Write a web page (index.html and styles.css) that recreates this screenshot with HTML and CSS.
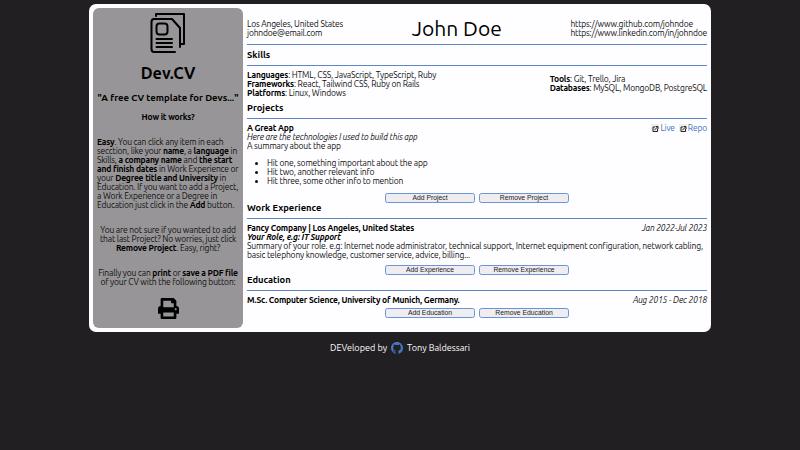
FILE: index.html
```html
<!DOCTYPE html>
<html lang="en">
<head>
<meta charset="utf-8">
<title>Dev.CV</title>
<link rel="stylesheet" href="styles.css">
</head>
<body>
<div class="card">
  <aside class="sidebar">
    <svg class="logo" viewBox="0 0 36 40" fill="none" stroke="#000" stroke-width="2" stroke-linecap="round" stroke-linejoin="round">
      <path d="M6 3V1H34V31H31"/>
      <path d="M25 39H4Q1.500 39 1.500 36V9Q1.500 6 4 6H22L30 15V34"/>
      <rect x="6.500" y="10.500" width="11" height="11" rx="3"/>
      <path d="M6.500 26H22M6.500 30H22M6.500 34H22"/>
    </svg>
    <h1>Dev.CV</h1>
    <h2><span>"A free CV template for Devs..."</span></h2>
    <h3>How it works?</h3>
    <p class="easy"><span><b>Easy</b>. You can click any item in each</span><br><span>secction, like your <b>name</b>, a <b>language</b> in</span><br><span>Skills, <b>a company name</b> and <b>the start</b></span><br><span><b>and finish dates</b> in Work Experience or</span><br><span>your <b>Degree title and University</b> in</span><br><span>Education. If you want to add a Project,</span><br><span>a Work Experience or a Degree in</span><br><span>Education just click in the <b>Add</b> button.</span></p>
    <p class="sure"><span>You are not sure if you wanted to add</span><br><span>that last Project? No worries, just click</span><br><span><b>Remove Project</b>. Easy, right?</span></p>
    <p class="final"><span>Finally you can <b>print</b> or <b>save a PDF file</b></span><br><span>of your CV with the following button:</span></p>
    <svg class="printer" viewBox="0 0 512 512"><path d="M448 192V77.250c0-8.490-3.370-16.620-9.370-22.630L393.370 9.370c-6-6-14.140-9.370-22.630-9.370H96C78.330 0 64 14.330 64 32v160c-35.350 0-64 28.650-64 64v112c0 8.840 7.160 16 16 16h48v96c0 17.670 14.330 32 32 32h320c17.670 0 32-14.330 32-32v-96h48c8.840 0 16-7.160 16-16V256c0-35.350-28.650-64-64-64zm-64 256H128v-96h256v96zm0-224H128V64h192v48c0 8.840 7.160 16 16 16h48v96zm48 72c-13.250 0-24-10.750-24-24s10.750-24 24-24 24 10.750 24 24-10.750 24-24 24z"/></svg>
  </aside>
  <main>
    <header>
      <div class="contact"><span>Los Angeles, United States</span><br><span>johndoe@email.com</span></div>
      <div class="name">John Doe</div>
      <div class="contact"><span>https://www.github.com/johndoe</span><br><span>https://www.linkedin.com/in/johndoe</span></div>
    </header>
    <h4 class="first">Skills</h4>
    <section class="skills">
      <div class="languages"><span><b>Languages</b>: HTML, CSS, JavaScript, TypeScript, Ruby</span><br><span><b>Frameworks</b>: React, Tailwind CSS, Ruby on Rails</span><br><span><b>Platforms</b>: Linux, Windows</span></div>
      <div><span><b>Tools</b>: Git, Trello, Jira</span><br><span><b>Databases</b>: MySQL, MongoDB, PostgreSQL</span></div>
    </section>
    <h4>Projects</h4>
    <section class="project">
      <div class="row"><b>A Great App</b>
        <div class="links">
          <span class="ext"><svg viewBox="0 0 8 8"><path d="M4 3H2V7.500H6.500V5M3.500 6L6.500 3M4.500 2.500H7V5"/></svg></span><span>Live</span>
          <span class="ext second"><svg viewBox="0 0 8 8"><path d="M4 3H2V7.500H6.500V5M3.500 6L6.500 3M4.500 2.500H7V5"/></svg></span><span>Repo</span>
        </div>
      </div>
      <i>Here are the technologies I used to build this app</i><br><span>A summary about the app</span>
      <ul><li>Hit one, something important about the app</li><li>Hit two, another relevant info</li><li>Hit three, some other info to mention</li></ul>
    </section>
    <div class="buttons"><button>Add Project</button><button>Remove Project</button></div>
    <h4>Work Experience</h4>
    <section class="work">
      <div class="row"><b>Fancy Company | Los Angeles, United States</b><i>Jan 2022-Jul 2023</i></div>
      <b><i>Your Role, e.g: IT Support</i></b><br><span class="summary">Summary of your role. e.g: Internet node administrator, technical support, Internet equipment configuration, network cabling,</span><br><span class="summary">basic telephony knowledge, customer service, advice, billing...</span>
    </section>
    <div class="buttons"><button>Add Experience</button><button>Remove Experience</button></div>
    <h4>Education</h4>
    <section class="edu">
      <div class="row"><b>M.Sc. Computer Science, University of Munich, Germany.</b><i>Aug 2015 - Dec 2018</i></div>
    </section>
    <div class="buttons"><button>Add Education</button><button>Remove Education</button></div>
  </main>
</div>
<footer><span>DEVeloped by</span><svg viewBox="0 0 16 16"><path d="M8 0C3.580 0 0 3.580 0 8c0 3.540 2.290 6.530 5.470 7.590.4.070.55-.17.55-.38 0-.19-.01-.82-.01-1.490-2.010.37-2.530-.49-2.690-.94-.09-.23-.48-.94-.82-1.130-.28-.15-.68-.52-.01-.53.63-.01 1.080.58 1.230.82.72 1.210 1.870.87 2.330.66.07-.52.28-.87.51-1.070-1.780-.2-3.640-.89-3.640-3.950 0-.87.31-1.590.82-2.150-.08-.2-.36-1.020.08-2.120 0 0 .67-.21 2.200.82.64-.18 1.320-.27 2-.27s1.360.09 2 .27c1.530-1.040 2.200-.82 2.200-.82.44 1.100.16 1.920.08 2.120.51.56.82 1.270.82 2.150 0 3.070-1.870 3.750-3.650 3.950.29.25.54.73.54 1.480 0 1.070-.01 1.930-.01 2.200 0 .21.15.46.55.38A8.010 8.010 0 0 0 16 8c0-4.420-3.580-8-8-8z"/></svg><span>Tony Baldessari</span></footer>
</body>
</html>
```
FILE: styles.css
```css
* { box-sizing: border-box; }
body { margin: 0; padding-top: 4px; background: #221f22; color: #111; font: 8.500px/9px Ubuntu, "Noto Sans", sans-serif; letter-spacing: -0.19px; }
h1, h2, h3, h4, p, ul { margin: 0; }
span, b, i { white-space: nowrap; }
b { color: #000; }
.card { width: 622px; height: 328px; margin: 0 auto; padding: 4px; display: flex; gap: 4px; background: #fefdff; border-radius: 7px; }
.sidebar { width: 150px; height: 320px; padding: 5px 4px 0; border-radius: 6px; background: #979597; text-align: center; }
.logo { display: block; width: 36px; height: 40px; margin: 0 auto; }
h1 { margin-top: 10px; font-size: 16.300px; line-height: 20px; letter-spacing: 0; color: #000; }
h2 { margin-top: 10px; font-size: 9.500px; line-height: 10px; letter-spacing: 0; color: #000; }
h3 { margin-top: 10px; font-size: 8.500px; line-height: 9px; color: #000; }
.easy { margin-top: 16px; text-align: left; }
.sure { margin-top: 16px; }
.final { margin-top: 16px; }
.printer { display: block; width: 21px; height: 21px; margin: 11px auto 0; }
main { width: 460px; }
header { height: 37px; padding-top: 3px; border-bottom: 1px solid #5d86c5; display: flex; justify-content: space-between; align-items: center; }
.contact { padding-top: 2px; }
.name { font-size: 21px; line-height: 24px; letter-spacing: 0; color: #000; }
h4 { height: 16px; font-size: 9.350px; line-height: 10px; letter-spacing: 0; border-bottom: 1px solid #5d86c5; color: #000; }
h4.first { height: 21px; padding-top: 5px; }
.skills { height: 37px; padding: 4px 0 5px; display: flex; justify-content: space-between; align-items: center; }
.languages { padding-top: 1px; }
.row { display: flex; justify-content: space-between; height: 9px; }
.project, .work, .edu { padding-top: 5px; }
.project { height: 73px; }
.work { height: 45px; }
.summary { letter-spacing: -0.180px; }
.edu { height: 16px; }
ul { padding-left: 20px; margin-top: 8px; }
.links { display: flex; color: #4273be; }
.ext { width: 8px; height: 8px; margin: 0 1px 0 0; background: #efedef; }
.ext.second { margin-left: 4px; }
.ext svg { display: block; width: 8px; height: 8px; fill: none; stroke: #222; stroke-width: 1; }
.buttons { height: 11px; display: flex; justify-content: center; gap: 4px; padding-top: 1px; }
button { width: 90px; height: 10px; padding: 0; border: 1px solid #6b94d6; border-radius: 2.500px; background: #efedf0; color: #222; font: 6.800px/8px "Liberation Sans", sans-serif; }
footer { margin-top: 9px; height: 14px; display: flex; justify-content: center; align-items: center; gap: 4px; color: #fefdff; font-size: 9.100px; letter-spacing: 0; }
footer svg { width: 12px; height: 12px; fill: #4478c4; }
```
